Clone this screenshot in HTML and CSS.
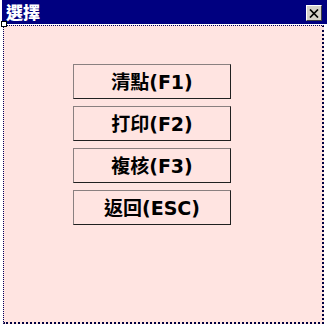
FILE: index.html
```html
<!DOCTYPE html>
<html>
<head>
<meta charset="utf-8">
<link rel="stylesheet" href="styles.css">
</head>
<body>
<div class="window">
  <div class="titlebar">
    <span class="title">選擇</span>
    <div class="close">
      <svg width="10" height="9" viewBox="0 0 10 9"><path d="M1 0.5 L9 8.5 M9 0.5 L1 8.5" stroke="#000" stroke-width="1.7" fill="none"/></svg>
    </div>
  </div>
  <div class="client">
    <div class="buttons">
      <div class="btn">清點(F1)</div>
      <div class="btn">打印(F2)</div>
      <div class="btn">複核(F3)</div>
      <div class="btn">返回(ESC)</div>
    </div>
  </div>
  <div class="handle"></div>
</div>
</body>
</html>
```
FILE: styles.css
```css
html, body {
  margin: 0;
  padding: 0;
  background: #ffffff;
}
.window {
  position: relative;
  width: 327px;
  height: 330px;
  box-sizing: border-box;
  padding-left: 2px;
}
.titlebar {
  height: 24px;
  background: #000080;
  display: flex;
  align-items: center;
  justify-content: space-between;
  padding: 0 5px 0 4px;
}
.title {
  color: #ffffff;
  font-family: "Noto Sans CJK TC", "Noto Sans CJK SC", sans-serif;
  font-weight: 900;
  font-size: 17px;
  line-height: 22px;
}
.close {
  width: 16px;
  height: 16px;
  box-sizing: border-box;
  background: #d4d0c8;
  border-top: 1px solid #ffffff;
  border-left: 1px solid #ffffff;
  border-right: 1px solid #404040;
  border-bottom: 1px solid #404040;
  display: flex;
  align-items: center;
  justify-content: center;
  margin-top: 2px;
}
.close svg { display: block; }
.client {
  margin: 1px 0 0 1px;
  width: 321px;
  height: 299px;
  box-sizing: border-box;
  background: #ffe4e1;
  border: 1px dotted #000060;
  border-right: 2px dotted #000040;
  border-bottom: 2px dotted #000040;
  padding: 38px 0 0 69px;
}
.buttons {
  display: flex;
  flex-direction: column;
  gap: 7px;
}
.btn {
  width: 158px;
  height: 35px;
  box-sizing: border-box;
  border-top: 1px solid #8a8080;
  border-left: 1px solid #8a8080;
  border-right: 1px solid #202020;
  border-bottom: 1px solid #202020;
  display: flex;
  align-items: center;
  justify-content: center;
  font-family: "DejaVu Sans", "Noto Sans CJK TC", sans-serif;
  font-weight: bold;
  font-size: 19px;
  color: #000000;
  padding-bottom: 2px;
}
.handle {
  position: absolute;
  left: 1px;
  top: 21px;
  width: 6px;
  height: 6px;
  box-sizing: border-box;
  background: #ffffff;
  border: 1px solid #000000;
}
```
